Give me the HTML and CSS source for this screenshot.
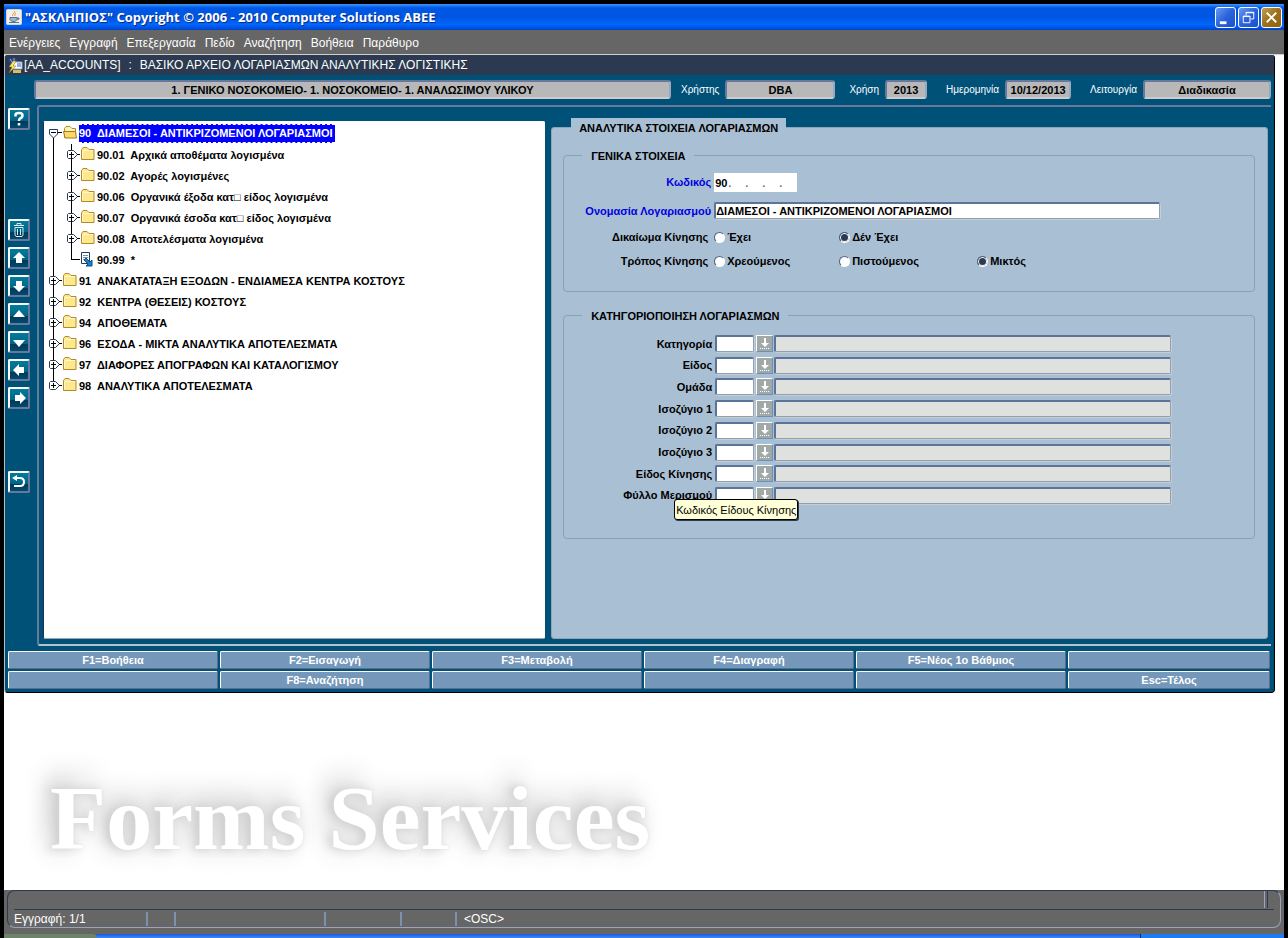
FILE: index.html
```
<!DOCTYPE html>
<html lang="el">
<head>
    <meta charset="UTF-8">
    <meta name="viewport" content="width=device-width, initial-scale=1.0">
    <title>ΑΣΚΛΗΠΙΟΣ</title>
    <link rel="stylesheet" href="styles.css">
</head>
<body>
    <!-- shared icons -->
    <svg class="sprite" aria-hidden="true">
        <symbol id="plus" viewBox="0 0 14 11">
            <path d="M2.5 1.5h5l4 4-4 4h-5l-1-1v-6z" fill="#fff" stroke="#2b3a55"/>
            <path d="M3 5.500h5M5.500 3v5M11 5.500h3" stroke="#000"/>
        </symbol>
        <symbol id="minus" viewBox="0 0 14 11">
            <path d="M1.500 1.500h8v4.500l-4 4-4-4z" fill="#fff" stroke="#2b3a55"/>
            <path d="M3 4.500h5M10 4.500h4" stroke="#000"/>
        </symbol>
        <symbol id="folder" viewBox="0 0 14 13">
            <path d="M.5 12.500V2.500l1.500-2h4l2 2h5v10z" fill="#fde98c" stroke="#b08a2c"/>
            <path d="M1.500 11V4M2 3.500h10" stroke="#fff8cf"/>
        </symbol>
        <symbol id="folder-open" viewBox="0 0 14 13">
            <path d="M1.500 11.500v-9l1.500-2h4l2 2h3.500v9z" fill="#fdf3b8" stroke="#b08a2c"/>
            <path d="M.5 5.500h12l1 6.500H2z" fill="#fbd96a" stroke="#a07a20"/>
        </symbol>
        <symbol id="leaf" viewBox="0 0 13 15">
            <path d="M1.500.5h8v11h-8z" fill="#fff" stroke="#2b3a55"/>
            <path d="M3 3.500h5M3 5.500h5M3 7.500h3" stroke="#7a8aa0"/>
            <path d="M4 8l2-2 4 4 2-2v6H6l2-2z" fill="#1d7fc8" stroke="#0d4f88"/>
        </symbol>
        <symbol id="lov" viewBox="0 0 12 13">
            <path d="M5 1h2v5h3l-4 4-4-4h3z" fill="#fff"/>
            <path d="M1 11.500h10" stroke="#fff" stroke-dasharray="1 1"/>
        </symbol>
    </svg>

    <header class="titlebar">
        <svg class="java" viewBox="0 0 16 16">
            <rect x=".5" y=".5" width="15" height="15" rx="1" fill="#f0f0ea" stroke="#d8d4c4"/>
            <path d="M8 2c2 2-3 3-1 5M10 4c-2 1-1 2-1 3" fill="none" stroke="#e8902c"/>
            <path d="M4 8.500h7v2q-1 2-3 2H7q-2 0-3-2zM11 9h2v1l-2 1M3 13.500h10" fill="#9fb4d0" stroke="#5a7090"/>
        </svg>
        <h1>"ΑΣΚΛΗΠΙΟΣ" Copyright © 2006 - 2010 Computer Solutions ΑΒΕΕ</h1>
        <div class="window-buttons">
            <button aria-label="Ελαχιστοποίηση"><svg viewBox="0 0 20 20"><path d="M4 14h7v3H4z" fill="#fff"/></svg></button>
            <button aria-label="Επαναφορά"><svg viewBox="0 0 20 20"><path d="M7.500 8V4.500h8v7H12M7 5h9M4.500 8.500h7v7h-7zM4 9h8" fill="none" stroke="#fff"/></svg></button>
            <button class="close" aria-label="Κλείσιμο"><svg viewBox="0 0 20 20"><path d="M5 5l10 10M15 5L5 15" stroke="#fff" stroke-width="2"/></svg></button>
        </div>
    </header>

    <nav class="menubar">
        <a href="#">Ενέργειες</a>
        <a href="#">Εγγραφή</a>
        <a href="#">Επεξεργασία</a>
        <a href="#">Πεδίο</a>
        <a href="#">Αναζήτηση</a>
        <a href="#">Βοήθεια</a>
        <a href="#">Παράθυρο</a>
    </nav>

    <main class="workspace">
        <section class="form-window">
            <div class="form-title">
                <svg viewBox="0 0 17 17">
                    <path d="M1 3l3-2h4l3 2v3H8v3l-3 1z" fill="#26448c"/>
                    <path d="M3 2l2 3M7 1v4" stroke="#8fa8e0"/>
                    <path d="M6 5h9v7H6z" fill="#fff" stroke="#a0a8b8"/>
                    <path d="M10 7h4M10 9h4" stroke="#2a5ad0"/>
                    <path d="M6 4L2 10h3l-3 6 7-7H6l3-5z" fill="#ffe860" stroke="#80701c" stroke-width=".5"/>
                    <path d="M6 13h8v3H6z" fill="#d8c060"/>
                </svg>
                <span>[AA_ACCOUNTS]</span>
                <span class="colon">:</span>
                <span>ΒΑΣΙΚΟ ΑΡΧΕΙΟ ΛΟΓΑΡΙΑΣΜΩΝ ΑΝΑΛΥΤΙΚΗΣ ΛΟΓΙΣΤΙΚΗΣ</span>
            </div>

            <div class="info-row">
                <output class="info company">1. ΓΕΝΙΚΟ ΝΟΣΟΚΟΜΕΙΟ- 1. ΝΟΣΟΚΟΜΕΙΟ- 1. ΑΝΑΛΩΣΙΜΟΥ ΥΛΙΚΟΥ</output>
                <label for="user">Χρήστης</label><output id="user" class="info user">DBA</output>
                <label for="year">Χρήση</label><output id="year" class="info year">2013</output>
                <label for="date">Ημερομηνία</label><output id="date" class="info date">10/12/2013</output>
                <label for="mode">Λειτουργία</label><output id="mode" class="info mode">Διαδικασία</output>
            </div>

            <div class="middle">
                <div class="toolbar">
                    <button class="help" aria-label="Βοήθεια"><svg viewBox="0 0 18 18"><path d="M5.500 6.500V5q0-2 3.500-2t3.500 2.500Q12.500 7.500 10 8.500 9 9 9 11M9 13v2.500" fill="none" stroke="#fff" stroke-width="2.500"/></svg></button>
                    <button aria-label="Διαγραφή"><svg viewBox="0 0 18 18"><path d="M4 4.500h10M7 4V2.500h4V4M5 6.500h8V14l-1 1.500H6L5 14zM7.500 8v6M10.500 8v6" fill="none" stroke="#dfe8ee"/></svg></button>
                    <button aria-label="Πρώτη"><svg viewBox="0 0 18 18"><path d="M9 3l6 6h-3v5H6V9H3z" fill="#fff"/></svg></button>
                    <button aria-label="Τελευταία"><svg viewBox="0 0 18 18"><path d="M9 15l6-6h-3V4H6v5H3z" fill="#fff"/></svg></button>
                    <button aria-label="Προηγούμενη"><svg viewBox="0 0 18 18"><path d="M9 5l6 7H3z" fill="#fff"/></svg></button>
                    <button aria-label="Επόμενη"><svg viewBox="0 0 18 18"><path d="M9 14l6-7H3z" fill="#fff"/></svg></button>
                    <button aria-label="Αριστερά"><svg viewBox="0 0 18 18"><path d="M3 9l6-6v3h5v6H9v3z" fill="#fff"/></svg></button>
                    <button aria-label="Δεξιά"><svg viewBox="0 0 18 18"><path d="M16 9l-6-6v3H5v6h5v3z" fill="#fff"/></svg></button>
                    <button class="back" aria-label="Επιστροφή"><svg viewBox="0 0 18 18"><path d="M2 5l5-3v2h3q5 0 5 5t-5 5H4v-2h6q3 0 3-3t-3-3H7v2z" fill="#fff"/></svg></button>
                </div>

                <div class="frame">
                    <div class="tree">
                        <ul>
                            <li>
                                <div class="node"><svg class="handle"><use href="#minus"/></svg><svg class="folder"><use href="#folder-open"/></svg><span class="selected">90&nbsp; ΔΙΑΜΕΣΟΙ - ΑΝΤΙΚΡΙΖΟΜΕΝΟΙ ΛΟΓΑΡΙΑΣΜΟΙ</span></div>
                                <ul>
                                    <li><div class="node"><svg class="handle"><use href="#plus"/></svg><svg class="folder"><use href="#folder"/></svg><span>90.01&nbsp; Αρχικά αποθέματα λογισμένα</span></div></li>
                                    <li><div class="node"><svg class="handle"><use href="#plus"/></svg><svg class="folder"><use href="#folder"/></svg><span>90.02&nbsp; Αγορές λογισμένες</span></div></li>
                                    <li><div class="node"><svg class="handle"><use href="#plus"/></svg><svg class="folder"><use href="#folder"/></svg><span>90.06&nbsp; Οργανικά έξοδα κατ□ είδος λογισμένα</span></div></li>
                                    <li><div class="node"><svg class="handle"><use href="#plus"/></svg><svg class="folder"><use href="#folder"/></svg><span>90.07&nbsp; Οργανικά έσοδα κατ□ είδος λογισμένα</span></div></li>
                                    <li><div class="node"><svg class="handle"><use href="#plus"/></svg><svg class="folder"><use href="#folder"/></svg><span>90.08&nbsp; Αποτελέσματα λογισμένα</span></div></li>
                                    <li><div class="node"><i class="stub"></i><svg class="leaf"><use href="#leaf"/></svg><span>90.99&nbsp; *</span></div></li>
                                </ul>
                            </li>
                            <li><div class="node"><svg class="handle"><use href="#plus"/></svg><svg class="folder"><use href="#folder"/></svg><span>91&nbsp; ΑΝΑΚΑΤΑΤΑΞΗ ΕΞΟΔΩΝ - ΕΝΔΙΑΜΕΣΑ ΚΕΝΤΡΑ ΚΟΣΤΟΥΣ</span></div></li>
                            <li><div class="node"><svg class="handle"><use href="#plus"/></svg><svg class="folder"><use href="#folder"/></svg><span>92&nbsp; ΚΕΝΤΡΑ (ΘΕΣΕΙΣ) ΚΟΣΤΟΥΣ</span></div></li>
                            <li><div class="node"><svg class="handle"><use href="#plus"/></svg><svg class="folder"><use href="#folder"/></svg><span>94&nbsp; ΑΠΟΘΕΜΑΤΑ</span></div></li>
                            <li><div class="node"><svg class="handle"><use href="#plus"/></svg><svg class="folder"><use href="#folder"/></svg><span>96&nbsp; ΕΣΟΔΑ - ΜΙΚΤΑ ΑΝΑΛΥΤΙΚΑ ΑΠΟΤΕΛΕΣΜΑΤΑ</span></div></li>
                            <li><div class="node"><svg class="handle"><use href="#plus"/></svg><svg class="folder"><use href="#folder"/></svg><span>97&nbsp; ΔΙΑΦΟΡΕΣ ΑΠΟΓΡΑΦΩΝ ΚΑΙ ΚΑΤΑΛΟΓΙΣΜΟΥ</span></div></li>
                            <li><div class="node"><svg class="handle"><use href="#plus"/></svg><svg class="folder"><use href="#folder"/></svg><span>98&nbsp; ΑΝΑΛΥΤΙΚΑ ΑΠΟΤΕΛΕΣΜΑΤΑ</span></div></li>
                        </ul>
                    </div>

                    <div class="details">
                        <h2 class="tab">ΑΝΑΛΥΤΙΚΑ ΣΤΟΙΧΕΙΑ ΛΟΓΑΡΙΑΣΜΩΝ</h2>
                        <form class="panel">
                            <fieldset class="general">
                                <legend>ΓΕΝΙΚΑ ΣΤΟΙΧΕΙΑ</legend>
                                <div class="row">
                                    <label class="key" for="code">Κωδικός</label>
                                    <div class="code-box">
                                        <input id="code" value="90"><i>.</i><i>.</i><i>.</i><i>.</i>
                                    </div>
                                </div>
                                <div class="row name-row">
                                    <label class="key" for="name">Ονομασία Λογαριασμού</label>
                                    <input id="name" class="field" value="ΔΙΑΜΕΣΟΙ - ΑΝΤΙΚΡΙΖΟΜΕΝΟΙ ΛΟΓΑΡΙΑΣΜΟΙ">
                                </div>
                                <div class="row choice">
                                    <span class="caption">Δικαίωμα Κίνησης</span>
                                    <label><input type="radio" name="right">Έχει</label>
                                    <label><input type="radio" name="right" checked>Δέν Έχει</label>
                                </div>
                                <div class="row choice">
                                    <span class="caption">Τρόπος Κίνησης</span>
                                    <label><input type="radio" name="way">Χρεούμενος</label>
                                    <label><input type="radio" name="way">Πιστούμενος</label>
                                    <label><input type="radio" name="way" checked>Μικτός</label>
                                </div>
                            </fieldset>

                            <fieldset class="categories">
                                <legend>ΚΑΤΗΓΟΡΙΟΠΟΙΗΣΗ ΛΟΓΑΡΙΑΣΜΩΝ</legend>
                                <div class="lov-rows">
                                    <div class="lov-row"><label for="c1">Κατηγορία</label><input id="c1" class="field short"><button type="button" aria-label="Λίστα"><svg><use href="#lov"/></svg></button><input class="field long" aria-label="Περιγραφή" readonly></div>
                                    <div class="lov-row"><label for="c2">Είδος</label><input id="c2" class="field short"><button type="button" aria-label="Λίστα"><svg><use href="#lov"/></svg></button><input class="field long" aria-label="Περιγραφή" readonly></div>
                                    <div class="lov-row"><label for="c3">Ομάδα</label><input id="c3" class="field short"><button type="button" aria-label="Λίστα"><svg><use href="#lov"/></svg></button><input class="field long" aria-label="Περιγραφή" readonly></div>
                                    <div class="lov-row"><label for="c4">Ισοζύγιο 1</label><input id="c4" class="field short"><button type="button" aria-label="Λίστα"><svg><use href="#lov"/></svg></button><input class="field long" aria-label="Περιγραφή" readonly></div>
                                    <div class="lov-row"><label for="c5">Ισοζύγιο 2</label><input id="c5" class="field short"><button type="button" aria-label="Λίστα"><svg><use href="#lov"/></svg></button><input class="field long" aria-label="Περιγραφή" readonly></div>
                                    <div class="lov-row"><label for="c6">Ισοζύγιο 3</label><input id="c6" class="field short"><button type="button" aria-label="Λίστα"><svg><use href="#lov"/></svg></button><input class="field long" aria-label="Περιγραφή" readonly></div>
                                    <div class="lov-row"><label for="c7">Είδος Κίνησης</label><input id="c7" class="field short"><button type="button" aria-label="Λίστα"><svg><use href="#lov"/></svg></button><input class="field long" aria-label="Περιγραφή" readonly></div>
                                    <div class="lov-row"><label for="c8">Φύλλο Μερισμού</label><input id="c8" class="field short"><button type="button" aria-label="Λίστα"><svg><use href="#lov"/></svg></button><input class="field long" aria-label="Περιγραφή" readonly></div>
                                    <div class="tooltip" role="tooltip">Κωδικός Είδους Κίνησης</div>
                                </div>
                            </fieldset>
                        </form>
                    </div>
                </div>
            </div>

            <div class="fkeys">
                <button>F1=Βοήθεια</button>
                <button>F2=Εισαγωγή</button>
                <button>F3=Μεταβολή</button>
                <button>F4=Διαγραφή</button>
                <button>F5=Νέος 1ο Βάθμιος</button>
                <button></button>
                <button></button>
                <button>F8=Αναζήτηση</button>
                <button></button>
                <button></button>
                <button></button>
                <button>Esc=Τέλος</button>
            </div>
        </section>

        <div class="watermark">Forms Services</div>
    </main>

    <footer class="statusbar">
        <div class="status-box">
            <div class="message-line"></div>
            <div class="status-cells">
                <span class="record">Εγγραφή: 1/1</span>
                <span class="c28"></span>
                <span class="c150"></span>
                <span class="c76"></span>
                <span class="c55"></span>
                <span class="osc">&lt;OSC&gt;</span>
            </div>
        </div>
    </footer>
    <div class="taskbar"><i class="start"></i><i class="tray"></i></div>
</body>
</html>
```
FILE: styles.css
```
* {
    box-sizing: border-box;
}
body {
    margin: 0;
    padding: 4px 4px 0;
    min-height: 100vh;
    display: flex;
    flex-direction: column;
    background: #000;
    font-family: "Liberation Sans", Arial, sans-serif;
    font-size: 11px;
    color: #000;
}
button, input {
    font: inherit;
    margin: 0;
    padding: 0;
}
ul {
    list-style: none;
    margin: 0;
    padding: 0;
}
svg {
    display: block;
    flex: none;
}
.sprite {
    position: absolute;
    width: 0;
    height: 0;
}

/* title bar */
.titlebar {
    display: flex;
    align-items: center;
    height: 26px;
    padding: 0 2px;
    background: linear-gradient(#3d95ff, #0058e6 15%, #0055e0 50%, #0066ff 80%, #0043c8);
}
.java {
    width: 16px;
    height: 16px;
}
.titlebar h1 {
    flex: 1;
    margin: 0 0 0 3px;
    font: bold 13px "Open Sans", sans-serif;
    color: #fff;
    text-shadow: 1px 1px #0a2a80;
}
.window-buttons {
    display: flex;
    gap: 2px;
}
.window-buttons button {
    width: 21px;
    height: 21px;
    border: 1px solid #fff;
    border-radius: 3px;
    background: linear-gradient(135deg, #6a9cf0, #2a62dc 50%, #1c50cc);
}
.window-buttons .close {
    background: linear-gradient(135deg, #c0a050, #9c7018 50%, #8c6414);
}
.window-buttons svg {
    width: 19px;
    height: 19px;
}

/* menu */
.menubar {
    display: flex;
    gap: 9px;
    height: 25px;
    padding-left: 5px;
    line-height: 26px;
    background: #666;
    border-bottom: 1px solid #d0d0d0;
}
.menubar a {
    color: #fff;
    font-size: 12px;
    text-decoration: none;
}

/* form window */
.workspace {
    flex: 1;
    background: #fff;
}
.form-window {
    margin-right: 9px;
    background: #005178;
    border-left: 1px solid #b8bcc4;
    border-right: 1px solid #000;
    border-bottom: 1px solid #000;
    border-radius: 3px 3px 4px 4px;
}
.form-title {
    display: flex;
    align-items: center;
    height: 20px;
    padding-left: 2px;
    background: #2b3a50;
    border-radius: 3px 3px 0 0;
    color: #fff;
    font-size: 12px;
    line-height: 20px;
}
.form-title svg {
    width: 17px;
    height: 17px;
}
.form-title .colon {
    width: 19px;
    text-align: center;
}
.info-row {
    display: flex;
    align-items: center;
    height: 29px;
    padding: 0 3px 0 29px;
    color: #fff;
}
.info-row label {
    padding-right: 6px;
    font-size: 10px;
    text-align: right;
}
.info {
    height: 19px;
    background: #b8b8b8;
    border: 2px solid #68789c;
    border-right-color: #98a8c0;
    border-bottom-color: #ccc;
    border-radius: 3px;
    color: #000;
    font-weight: bold;
    line-height: 16px;
    text-align: center;
}
.company {
    flex: 1;
    margin-right: 10px;
}
.user {
    width: 110px;
    margin-right: 14px;
}
.year {
    width: 42px;
    margin-right: 19px;
}
.date {
    width: 66px;
    margin-right: 19px;
}
.mode {
    width: 128px;
}

/* side toolbar */
.middle {
    display: flex;
    padding: 1px 3px 0 3px;
}
.toolbar {
    display: flex;
    flex-direction: column;
    gap: 6px;
    width: 29px;
    padding-top: 3px;
}
.toolbar button {
    width: 22px;
    height: 22px;
    border: 2px solid #68789c;
    border-top-color: #fff;
    border-left-color: #fff;
    border-radius: 2px;
    background: linear-gradient(#007c9c, #006488 60%, #003858 61%, #004c70);
}
.toolbar svg {
    width: 18px;
    height: 18px;
}
.toolbar .help {
    margin-bottom: 83px;
}
.toolbar .back {
    margin-top: 56px;
}
.frame {
    flex: 1;
    display: flex;
    gap: 6px;
    padding: 11px 3px 5px 4px;
    border: 2px solid #68789c;
    border-right: 0;
    border-bottom-color: #b8c0cc;
    border-radius: 3px 0 0 3px;
}

/* accounts tree */
.tree {
    flex: 501;
    margin-top: 3px;
    padding-top: 1px;
    background: #fff;
    border: 1px solid #fff;
    border-left-color: #203050;
    border-bottom-color: #98a8b8;
    border-radius: 2px;
    font-weight: bold;
}
.tree li {
    position: relative;
    padding-left: 4px;
}
.tree ul ul {
    padding-left: 14px;
}
.node {
    position: relative;
    display: flex;
    align-items: center;
    height: 21px;
    white-space: nowrap;
}
.handle {
    width: 14px;
    height: 11px;
    margin-right: 1px;
}
.folder {
    width: 14px;
    height: 13px;
    margin-right: 2px;
    margin-bottom: 2px;
}
.leaf {
    width: 13px;
    height: 15px;
    margin-right: 4px;
}
.stub {
    width: 8px;
    margin-left: 6px;
    border-top: 1px solid #000;
}
.selected {
    height: 19px;
    padding-right: 2px;
    background: #00f;
    border-top: 1px dashed #fff;
    border-bottom: 1px dashed #fff;
    color: #fff;
    line-height: 17px;
}
/* vertical connectors between the nodes of one level */
.tree li::before {
    content: "";
    position: absolute;
    top: -10px;
    bottom: 10px;
    left: 9px;
    border-left: 1px solid #000;
}
.tree > ul > li:first-child::before {
    top: 15px;
    bottom: 0;
}
.tree ul ul li:first-child::before {
    top: 0;
}

/* details */
.details {
    flex: 718;
    display: flex;
    flex-direction: column;
}
.tab {
    align-self: flex-start;
    position: relative;
    height: 16px;
    margin: 0 0 -7px 20px;
    padding: 0 8px;
    background: #a9bfd3;
    font-size: 11px;
    font-weight: bold;
    line-height: 20px;
}
.panel {
    flex: 1;
    padding: 20px 12px 99px 11px;
    background: #a9bfd3;
    border: 1px solid #8fa4b8;
    border-radius: 3px;
}
fieldset {
    min-width: 0;
    margin: 0;
    padding: 0;
    border: 1px solid #8ca0b4;
    border-radius: 4px;
    font-weight: bold;
}
legend {
    height: 14px;
    margin-left: 18px;
    padding: 0 9px;
    line-height: 16px;
}
.general {
    height: 144px;
}
.categories {
    height: 231px;
    margin-top: 16px;
}
.row {
    display: flex;
    align-items: center;
    padding-right: 94px;
}
.row > .key, .row > .caption {
    width: 147px;
    margin-right: 3px;
    text-align: right;
}
.row > .caption {
    padding-right: 3px;
}
.key {
    color: #0000e0;
}
.code-box {
    display: flex;
    align-items: center;
    width: 83px;
    height: 19px;
    margin: 11px 0 10px;
    background: #fff;
    color: #5c7498;
}
.code-box input {
    width: 13px;
    margin-left: 1px;
    border: 0;
    font-weight: bold;
    color: #000;
}
.code-box i {
    width: 17px;
    font-style: normal;
}
.field {
    height: 17px;
    background: #fff;
    border: 2px solid #5c7498;
    border-right: 1px solid #8ca0b8;
    border-bottom: 1px solid #8ca0b8;
    border-radius: 2px;
    box-shadow: 1px 1px #ccc;
    font-weight: bold;
}
.name-row {
    margin-bottom: 6px;
}
#name {
    flex: 1;
    min-width: 0;
}
.choice {
    height: 24px;
}
.choice label {
    display: flex;
    align-items: center;
    gap: 2px;
    width: 125px;
}
.choice label + label {
    width: 138px;
}
input[type="radio"] {
    appearance: none;
    width: 11px;
    height: 11px;
    border: 1px solid #4c6080;
    border-right-color: #fff;
    border-bottom-color: #fff;
    border-radius: 50%;
    background: #fff;
}
input[type="radio"]:checked {
    background: #2b3a50;
    box-shadow: inset 0 0 0 1px #fff;
}

.lov-rows {
    position: relative;
    display: flex;
    flex-direction: column;
    justify-content: space-between;
    height: 169px;
    margin-top: 13px;
}
.lov-row {
    display: flex;
    align-items: center;
    padding-right: 83px;
}
.lov-row label {
    width: 148px;
    margin-right: 3px;
    text-align: right;
}
.short {
    width: 39px;
}
.lov-row button {
    display: flex;
    align-items: center;
    justify-content: center;
    width: 17px;
    height: 17px;
    margin: 0 1px 0 2px;
    border: 1px solid #6c90b8;
    border-top-color: #fff;
    border-left-color: #fff;
    background: #a0a8a8;
}
.lov-row svg {
    width: 12px;
    height: 13px;
}
.long {
    flex: 1;
    min-width: 0;
    background: #dfe1df;
}
.tooltip {
    position: absolute;
    top: 164px;
    left: 110px;
    height: 21px;
    padding: 0 1px;
    background: #ffffd8;
    border: 1px solid #000;
    border-radius: 3px;
    box-shadow: 1px 1px #2b3a50;
    font-weight: normal;
    line-height: 20px;
    white-space: nowrap;
}

/* function keys */
.fkeys {
    display: grid;
    grid-template-columns: repeat(5, 210fr) 202fr;
    gap: 2px;
    padding: 5px 4px 3px 3px;
}
.fkeys button {
    height: 18px;
    background: #7598ba;
    border: 1px solid #5c6c90;
    border-top-color: #fff;
    border-left-color: #fff;
    border-radius: 2px;
    color: #fff;
    font-weight: bold;
    line-height: 16px;
}

.watermark {
    padding: 70px 0 0 46px;
    font: bold 92px/110px "Liberation Serif", serif;
    color: #fff;
    text-shadow: 0 0 2px #ddd, -4px 0 10px #ccc, -8px -14px 24px #ccc, -8px 4px 24px #ddd;
    white-space: nowrap;
}

/* status bar */
.statusbar {
    height: 44px;
    padding: 0 3px;
    background: #666;
}
.status-box {
    height: 38px;
    padding: 0 6px;
    border: 1px solid #9aa4bc;
    border-top-color: #2b3a50;
    border-left-color: #2b3a50;
    border-radius: 8px;
}
.message-line {
    height: 19px;
    border-bottom: 1px solid #2b3a50;
}
.message-line::after {
    content: "";
    display: block;
    width: 2px;
    height: 17px;
    margin: 0 6px 0 auto;
    border-left: 1px solid #9aa4bc;
    border-right: 1px solid #2b3a50;
}
.status-cells {
    display: flex;
    height: 18px;
    padding-top: 2px;
    color: #fff;
    font-size: 12px;
    line-height: 15px;
}
.status-cells span {
    height: 14px;
    border-right: 2px solid #7c90b0;
}
.status-cells .record {
    width: 134px;
}
.c28 {
    width: 28px;
}
.c150 {
    width: 150px;
}
.c76 {
    width: 76px;
}
.c55 {
    width: 55px;
}
.status-cells .osc {
    padding-left: 7px;
    border: 0;
}
.taskbar {
    display: flex;
    justify-content: space-between;
    height: 4px;
    background: linear-gradient(#1858d8, #3c8cf8);
}
.start {
    width: 93px;
    background: #6c8468;
    border-radius: 0 4px 0 0;
}
.tray {
    width: 144px;
    border-left: 1px solid #0a2a60;
    background: #1c7cf0;
}
```
